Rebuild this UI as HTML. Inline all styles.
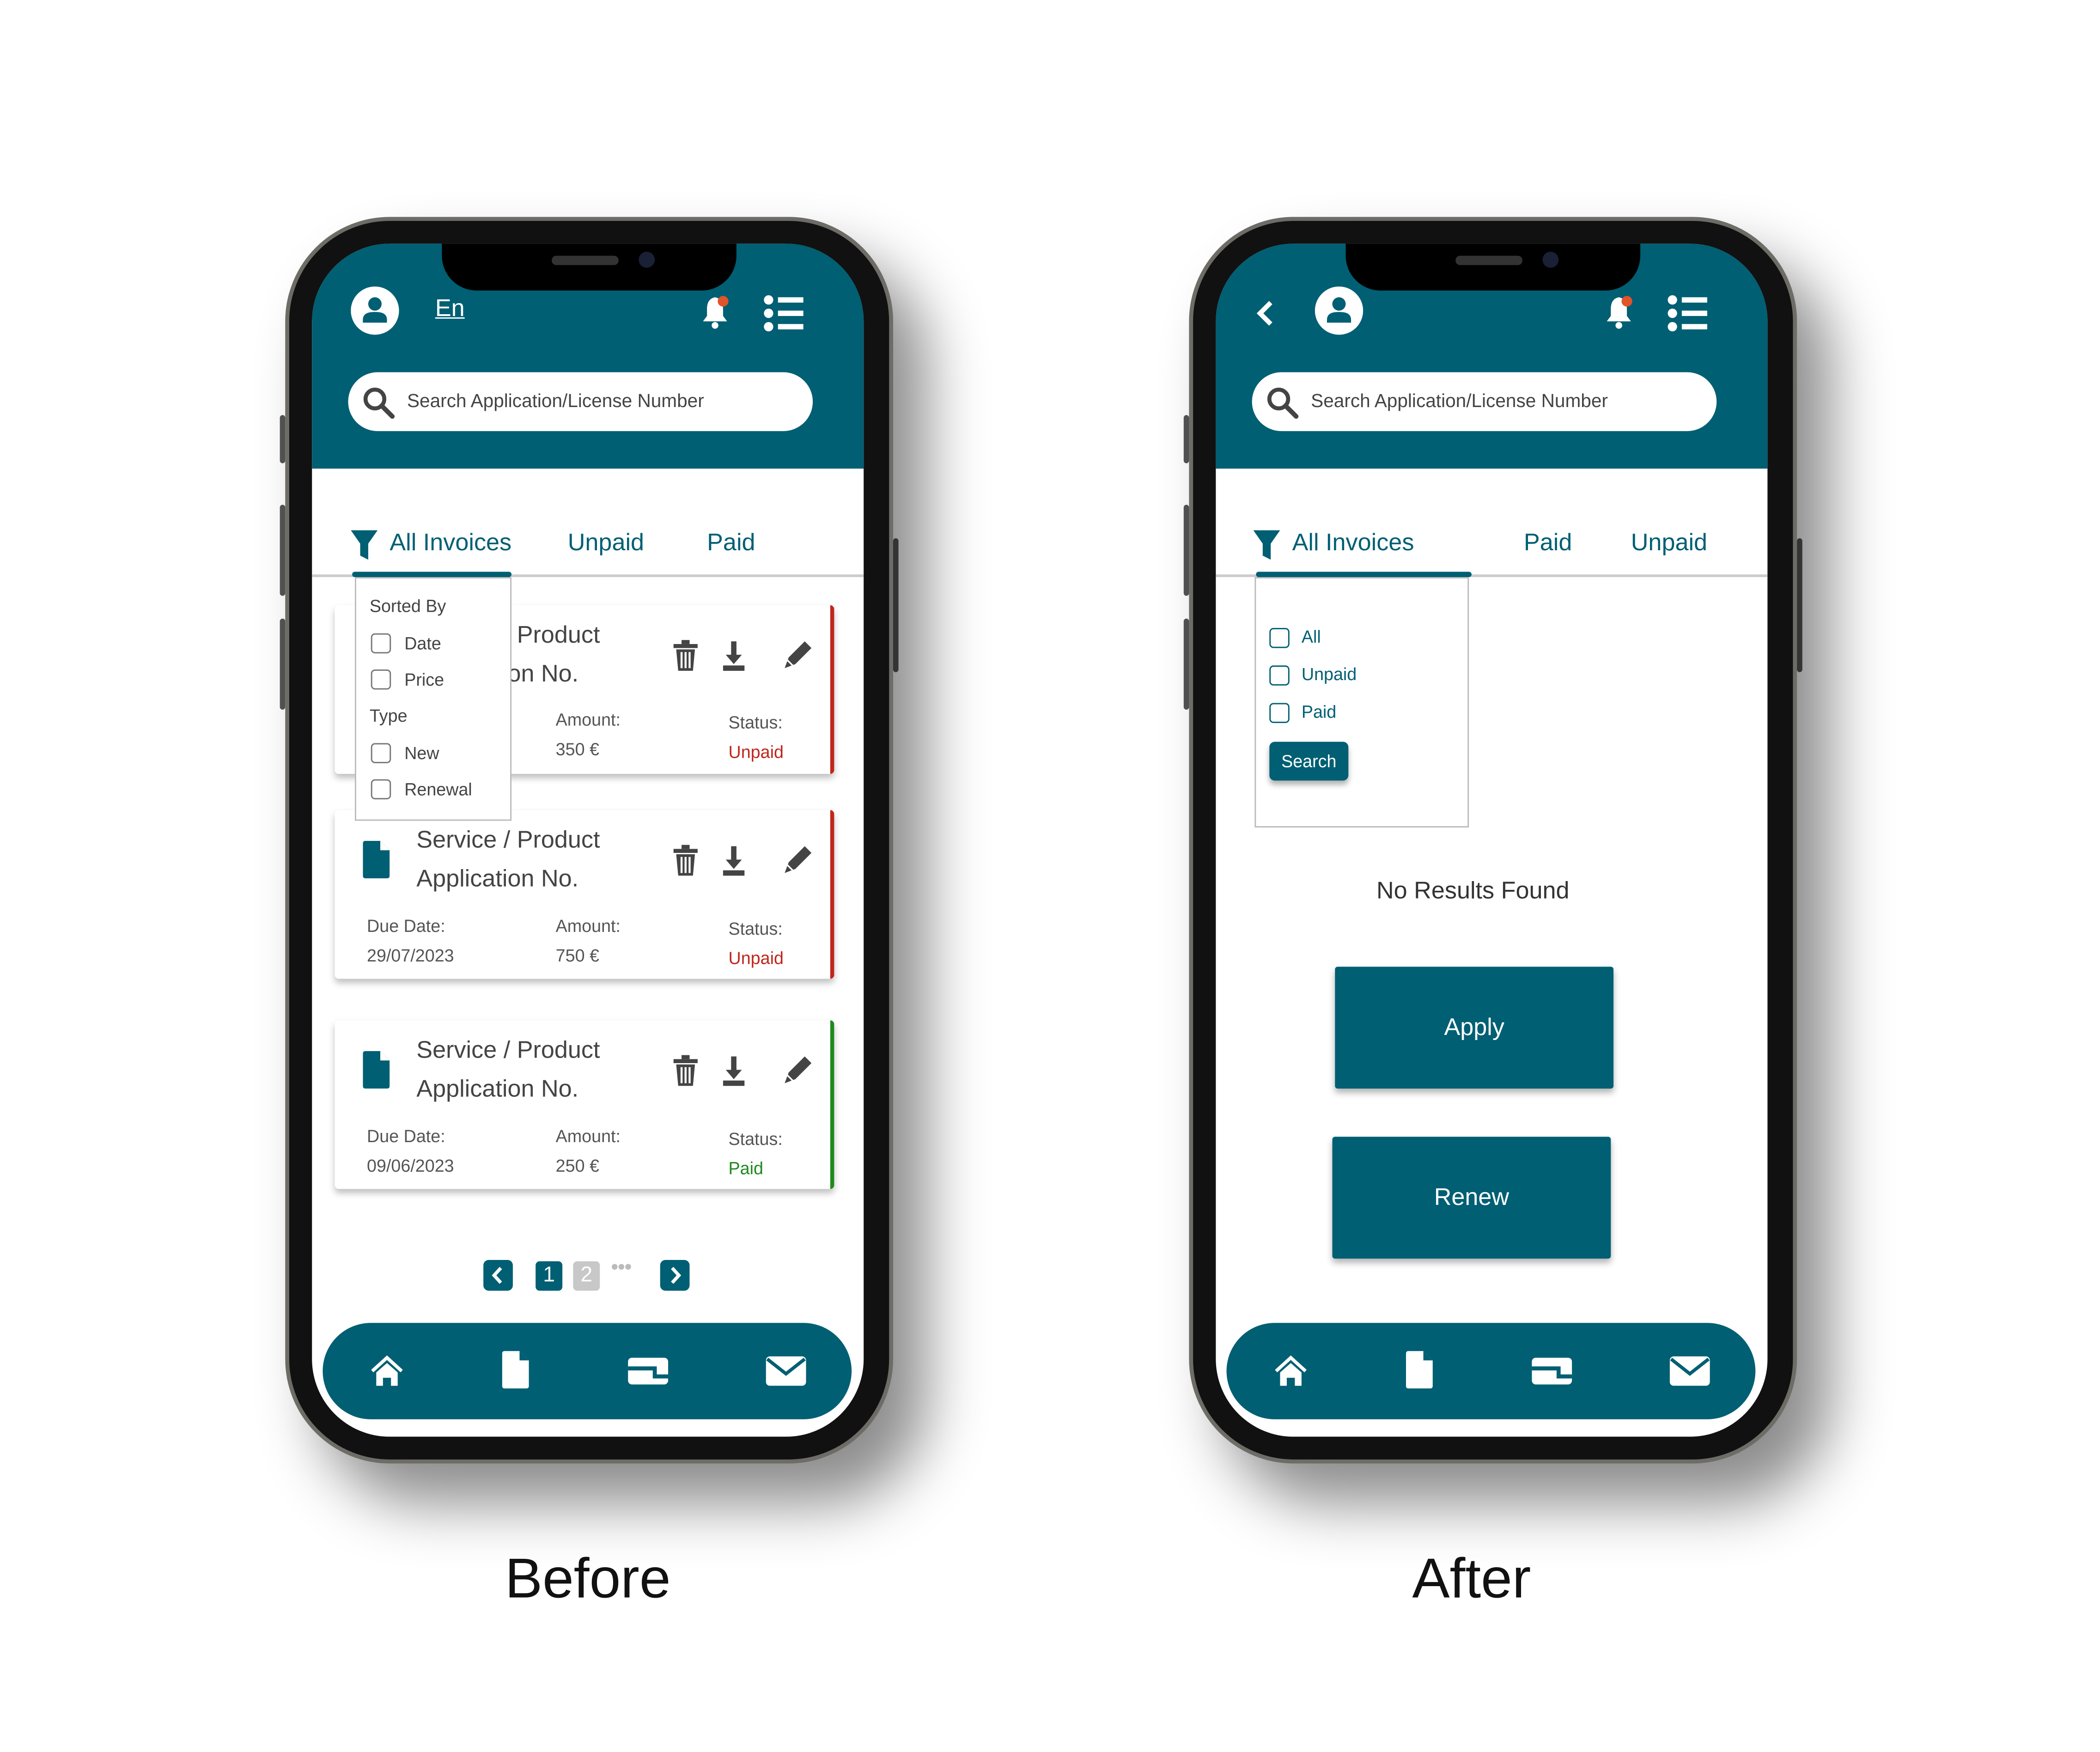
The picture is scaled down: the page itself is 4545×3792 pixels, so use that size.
<!DOCTYPE html>
<html><head><meta charset="utf-8"><style>
*{box-sizing:border-box;margin:0;padding:0}
html,body{width:4545px;height:3792px;background:#fff;overflow:hidden;font-family:"Liberation Sans",sans-serif}
#w{position:absolute;left:0;top:0;width:1568px;height:1308px;transform:scale(2.898);transform-origin:0 0}
.ph{position:absolute;top:162px;width:454px;height:931px}
.body{position:absolute;inset:0;border-radius:78px;background:#111;border:3px solid #6e6c66;box-shadow:25px 30px 45px rgba(0,0,0,.45)}
.btn{position:absolute;width:4px;background:#555;border-radius:2px}
.scr{position:absolute;left:20px;top:20px;width:412px;height:891px;border-radius:58px;background:#fff;overflow:hidden}
.hdr{position:absolute;left:0;top:0;width:412px;height:168px;background:#005f73}
.notch{position:absolute;left:97px;top:-2px;width:220px;height:37px;background:#000;border-radius:0 0 26px 26px}
.a{position:absolute}
.srch{position:absolute;left:27px;top:96px;width:347px;height:44px;background:#fff;border-radius:22px}
.srch span{position:absolute;left:44px;top:13px;font-size:14px;color:#444}
.tab{position:absolute;top:213px;font-size:18px;color:#005f73}
.gl{position:absolute;left:0;top:247px;width:412px;height:2px;background:#ccc}
.ul{position:absolute;top:245px;height:4px;background:#005f73;border-radius:2px}
.card{position:absolute;left:17px;width:373px;height:126px;background:#fff;border-radius:3px;box-shadow:0 3px 5px rgba(0,0,0,.25)}
.card .t{position:absolute;left:61px;font-size:18px;color:#444;line-height:29px;top:8px}
.card .l{position:absolute;font-size:13px;color:#555}
.dd{position:absolute;background:#fff;border:1px solid #bbb}
.cb{position:absolute;width:15px;height:15px;border:1.5px solid #777;border-radius:3px}
.nav{position:absolute;left:8px;top:806px;width:395px;height:72px;background:#005f73;border-radius:36px}
.big{position:absolute;width:208px;height:91px;background:#005f73;color:#fff;font-size:18px;text-align:center;line-height:91px;box-shadow:0 3px 5px rgba(0,0,0,.3);border-radius:2px}
.cap{position:absolute;top:1155px;font-size:42px;color:#111;width:300px;text-align:center}
.pg{position:absolute;top:759px;width:22px;height:23px;background:#005f73;border-radius:4px}
</style></head><body><div id="w">

<!-- LEFT PHONE -->
<div class="ph" style="left:213px">
<div class="btn" style="left:-4px;top:148px;height:36px"></div>
<div class="btn" style="left:-4px;top:215px;height:68px"></div>
<div class="btn" style="left:-4px;top:300px;height:68px"></div>
<div class="btn" style="right:-4px;top:240px;height:100px"></div>
<div class="body"></div>
<div class="scr">
 <div class="hdr">
  <svg class="a" style="left:29px;top:32px" width="36" height="36" viewBox="0 0 36 36"><circle cx="18" cy="18" r="18" fill="#fff"/><circle cx="18" cy="13" r="5" fill="#005f73"/><path d="M9 25c0-5 4-6 9-6s9 1 9 6v2H9z" fill="#005f73"/></svg>
  <div class="a" style="left:92px;top:38px;font-size:18px;color:#fff;text-decoration:underline">En</div>
  <svg class="a" style="left:290px;top:38px" width="24" height="26" viewBox="0 0 24 26"><path d="M11 2c-5 1-6 5-6 9v5l-3 4h18l-3-4v-5c0-4-1-8-6-9z" fill="#fff"/><circle cx="11" cy="23" r="2.5" fill="#fff"/><circle cx="17" cy="5" r="4" fill="#e2542a"/></svg>
  <svg class="a" style="left:337px;top:38px" width="30" height="28" viewBox="0 0 30 28"><g fill="#fff"><circle cx="4" cy="4" r="3.5"/><circle cx="4" cy="14" r="3.5"/><circle cx="4" cy="24" r="3.5"/><rect x="11" y="2" width="19" height="4"/><rect x="11" y="12" width="19" height="4"/><rect x="11" y="22" width="19" height="4"/></g></svg>
  <div class="srch"><svg class="a" style="left:10px;top:10px" width="26" height="26" viewBox="0 0 26 26"><circle cx="10" cy="10" r="7" fill="none" stroke="#444" stroke-width="3"/><path d="M15 15l8 8" stroke="#444" stroke-width="3.5" stroke-linecap="round"/></svg><span>Search Application/License Number</span></div>
 </div>
 <div class="notch"><div class="a" style="left:82px;top:11px;width:50px;height:7px;background:#333;border-radius:4px"></div><div class="a" style="left:147px;top:8px;width:12px;height:12px;background:#1a2035;border-radius:50%"></div></div>
 <svg class="a" style="left:29px;top:214px" width="20" height="22" viewBox="0 0 20 22"><path d="M0 0h20l-7 10v12l-6-3v-9z" fill="#005f73"/></svg>
 <div class="tab" style="left:58px">All Invoices</div>
 <div class="tab" style="left:191px">Unpaid</div>
 <div class="tab" style="left:295px">Paid</div>
 <div class="gl"></div><div class="ul" style="left:30px;width:119px"></div>

 <div class="card" style="top:270px;border-right:3px solid #c0261c">
  <div class="t">Service / Product<br>Application No.</div>
  <div class="l" style="left:165px;top:78px">Amount:</div><div class="l" style="left:165px;top:100px">350 €</div>
  <div class="l" style="left:294px;top:80px">Status:</div><div class="l" style="left:294px;top:102px;color:#c0261c">Unpaid</div>
  ICONS1
 </div>
 <div class="card" style="top:423px;border-right:3px solid #c0261c">
  DOC
  <div class="t">Service / Product<br>Application No.</div>
  <div class="l" style="left:24px;top:79px">Due Date:</div><div class="l" style="left:24px;top:101px">29/07/2023</div>
  <div class="l" style="left:165px;top:79px">Amount:</div><div class="l" style="left:165px;top:101px">750 €</div>
  <div class="l" style="left:294px;top:81px">Status:</div><div class="l" style="left:294px;top:103px;color:#c0261c">Unpaid</div>
  ICONS1
 </div>
 <div class="card" style="top:580px;border-right:3px solid #1f8a1f">
  DOC
  <div class="t">Service / Product<br>Application No.</div>
  <div class="l" style="left:24px;top:79px">Due Date:</div><div class="l" style="left:24px;top:101px">09/06/2023</div>
  <div class="l" style="left:165px;top:79px">Amount:</div><div class="l" style="left:165px;top:101px">250 €</div>
  <div class="l" style="left:294px;top:81px">Status:</div><div class="l" style="left:294px;top:103px;color:#1f8a1f">Paid</div>
  ICONS1
 </div>

 <div class="dd" style="left:32px;top:249px;width:117px;height:182px;font-size:13px;color:#444">
  <div class="a" style="left:10px;top:13px">Sorted By</div>
  <div class="cb" style="left:11px;top:41px"></div><div class="a" style="left:36px;top:41px">Date</div>
  <div class="cb" style="left:11px;top:68px"></div><div class="a" style="left:36px;top:68px">Price</div>
  <div class="a" style="left:10px;top:95px">Type</div>
  <div class="cb" style="left:11px;top:123px"></div><div class="a" style="left:36px;top:123px">New</div>
  <div class="cb" style="left:11px;top:150px"></div><div class="a" style="left:36px;top:150px">Renewal</div>
 </div>

 <div class="pg" style="left:128px"><svg width="22" height="23" viewBox="0 0 22 23"><path d="M13 6l-5 5.5 5 5.5" fill="none" stroke="#fff" stroke-width="2.5"/></svg></div>
 <div class="a" style="left:167px;top:760px;width:20px;height:22px;background:#005f73;border-radius:3px;color:#fff;font-size:16px;text-align:center;line-height:22px">1</div>
 <div class="a" style="left:195px;top:760px;width:20px;height:22px;background:#c8c8c8;border-radius:3px;color:#fff;font-size:16px;text-align:center;line-height:22px">2</div>
 <div class="a" style="left:223px;top:759px;color:#bbb;font-size:10px;letter-spacing:-1px">●●●</div>
 <div class="pg" style="left:260px"><svg width="22" height="23" viewBox="0 0 22 23"><path d="M9 6l5 5.5-5 5.5" fill="none" stroke="#fff" stroke-width="2.5"/></svg></div>
 NAV
</div></div>

<!-- RIGHT PHONE -->
<div class="ph" style="left:888px">
<div class="btn" style="left:-4px;top:148px;height:36px"></div>
<div class="btn" style="left:-4px;top:215px;height:68px"></div>
<div class="btn" style="left:-4px;top:300px;height:68px"></div>
<div class="btn" style="right:-4px;top:240px;height:100px"></div>
<div class="body"></div>
<div class="scr">
 <div class="hdr">
  <svg class="a" style="left:30px;top:42px" width="14" height="20" viewBox="0 0 14 20"><path d="M11 2L3 10l8 8" fill="none" stroke="#fff" stroke-width="3.5"/></svg>
  <svg class="a" style="left:74px;top:32px" width="36" height="36" viewBox="0 0 36 36"><circle cx="18" cy="18" r="18" fill="#fff"/><circle cx="18" cy="13" r="5" fill="#005f73"/><path d="M9 25c0-5 4-6 9-6s9 1 9 6v2H9z" fill="#005f73"/></svg>
  <svg class="a" style="left:290px;top:38px" width="24" height="26" viewBox="0 0 24 26"><path d="M11 2c-5 1-6 5-6 9v5l-3 4h18l-3-4v-5c0-4-1-8-6-9z" fill="#fff"/><circle cx="11" cy="23" r="2.5" fill="#fff"/><circle cx="17" cy="5" r="4" fill="#e2542a"/></svg>
  <svg class="a" style="left:337px;top:38px" width="30" height="28" viewBox="0 0 30 28"><g fill="#fff"><circle cx="4" cy="4" r="3.5"/><circle cx="4" cy="14" r="3.5"/><circle cx="4" cy="24" r="3.5"/><rect x="11" y="2" width="19" height="4"/><rect x="11" y="12" width="19" height="4"/><rect x="11" y="22" width="19" height="4"/></g></svg>
  <div class="srch"><svg class="a" style="left:10px;top:10px" width="26" height="26" viewBox="0 0 26 26"><circle cx="10" cy="10" r="7" fill="none" stroke="#444" stroke-width="3"/><path d="M15 15l8 8" stroke="#444" stroke-width="3.5" stroke-linecap="round"/></svg><span>Search Application/License Number</span></div>
 </div>
 <div class="notch"><div class="a" style="left:82px;top:11px;width:50px;height:7px;background:#333;border-radius:4px"></div><div class="a" style="left:147px;top:8px;width:12px;height:12px;background:#1a2035;border-radius:50%"></div></div>
 <svg class="a" style="left:28px;top:214px" width="20" height="22" viewBox="0 0 20 22"><path d="M0 0h20l-7 10v12l-6-3v-9z" fill="#005f73"/></svg>
 <div class="tab" style="left:57px">All Invoices</div>
 <div class="tab" style="left:230px">Paid</div>
 <div class="tab" style="left:310px">Unpaid</div>
 <div class="gl"></div>
 <div class="dd" style="left:29px;top:249px;width:160px;height:187px;font-size:13px;color:#005f73">
  <div class="cb" style="left:10px;top:37px;border-color:#005f73"></div><div class="a" style="left:34px;top:36px">All</div>
  <div class="cb" style="left:10px;top:65px;border-color:#005f73"></div><div class="a" style="left:34px;top:64px">Unpaid</div>
  <div class="cb" style="left:10px;top:93px;border-color:#005f73"></div><div class="a" style="left:34px;top:92px">Paid</div>
  <div class="a" style="left:10px;top:122px;width:59px;height:29px;background:#005f73;border-radius:4px;color:#fff;font-size:13px;text-align:center;line-height:29px;box-shadow:0 3px 4px rgba(0,0,0,.3)">Search</div>
 </div>
 <div class="ul" style="left:30px;width:161px"></div>
 <div class="a" style="left:0;width:384px;top:473px;text-align:center;font-size:18px;color:#333">No Results Found</div>
 <div class="big" style="left:89px;top:540px">Apply</div>
 <div class="big" style="left:87px;top:667px">Renew</div>
 NAV
</div></div>

<div class="cap" style="left:289px">Before</div>
<div class="cap" style="left:949px">After</div>
</div>
<script>
var ic='<svg class="a" style="left:252px;top:25px;width:110px;height:26px" viewBox="0 0 110 26"><g fill="#444"><rect x="1" y="4" width="18" height="3"/><rect x="7" y="1" width="6" height="3"/><path d="M3 8h14l-1.5 16h-11z"/></g><g stroke="#fff" stroke-width="1.5"><path d="M7 10v12M10 10v12M13 10v12"/></g><g fill="#444"><rect x="44" y="2" width="4" height="12"/><path d="M40 12h12l-6 7z"/><rect x="38" y="20" width="16" height="4"/></g><path d="M84 22l3-8 12-12 5 5-12 12z" fill="#444"/><path d="M86 16l4 4" stroke="#fff" stroke-width="1.2"/></svg>';
var doc='<svg class="a" style="left:21px;top:23px" width="20" height="28" viewBox="0 0 20 28"><path d="M0 2q0-2 2-2h11l7 7v19q0 2-2 2H2q-2 0-2-2z" fill="#005f73"/><path d="M13 0v7h7" fill="#fff"/></svg>';
var nav='<div class="nav"><svg class="a" style="left:36px;top:24px" width="24" height="24" viewBox="0 0 24 24"><path d="M1 12L12 2l11 10" fill="none" stroke="#fff" stroke-width="2.5"/><path d="M4 13l8-7 8 7v10h-5v-6h-6v6H4z" fill="#fff"/></svg><svg class="a" style="left:134px;top:21px" width="20" height="28" viewBox="0 0 20 28"><path d="M0 2q0-2 2-2h11l7 7v19q0 2-2 2H2q-2 0-2-2z" fill="#fff"/><path d="M13 0v7h7" fill="#005f73"/></svg><svg class="a" style="left:228px;top:26px" width="30" height="20" viewBox="0 0 30 20"><rect x="0" y="0" width="30" height="20" rx="3" fill="#fff"/><path d="M-1 8h21v6h10" fill="none" stroke="#005f73" stroke-width="3"/></svg><svg class="a" style="left:331px;top:25px" width="30" height="22" viewBox="0 0 30 22"><rect x="0" y="0" width="30" height="22" rx="3" fill="#fff"/><path d="M1 2l14 11L29 2" fill="none" stroke="#005f73" stroke-width="2.5"/></svg></div>';
document.body.innerHTML=document.body.innerHTML.split('ICONS1').join(ic).split('DOC').join(doc).split('NAV').join(nav);
</script>
</body></html>
